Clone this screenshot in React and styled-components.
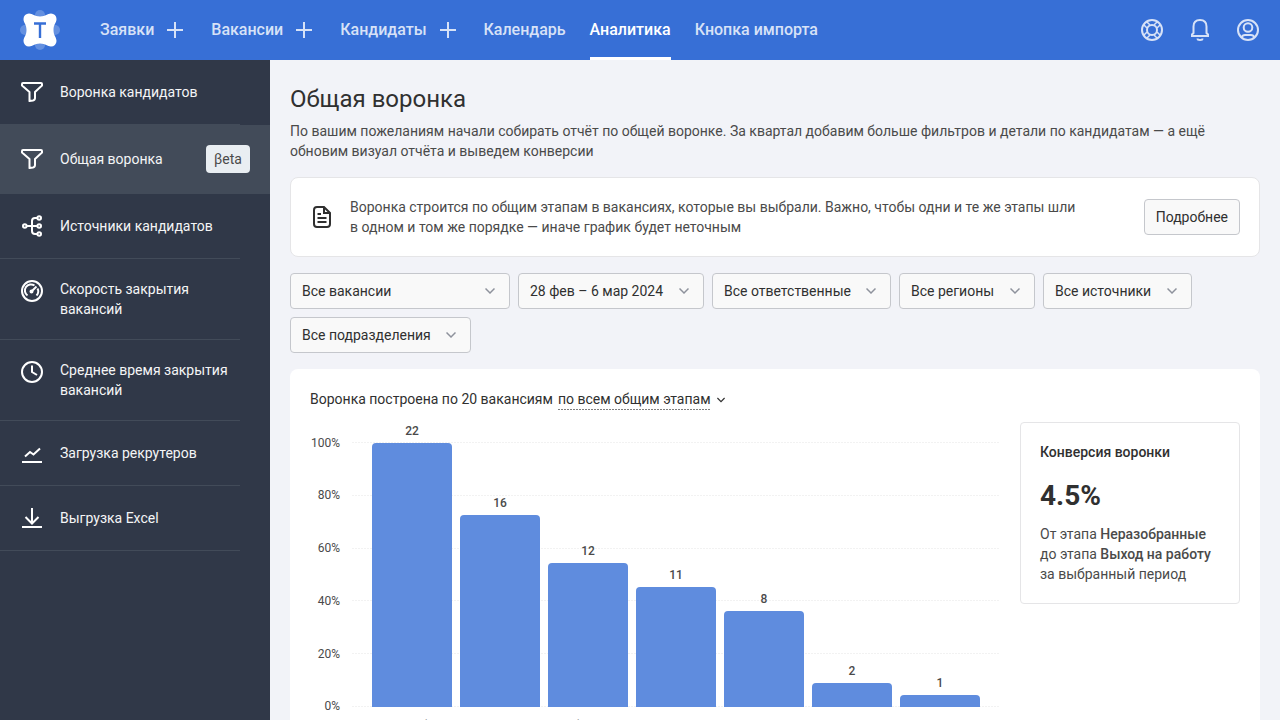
import React from 'react';
import styled, { createGlobalStyle } from 'styled-components';

const GlobalStyles = createGlobalStyle`
  :root {
    --blue: #376fd6;
    --bar: #5f8cde;
    --navy: #303848;
    --navy-light: #424b59;
    --grey: #f2f3f8;
    --text: #303030;
    --text-light: #4a4a4a;
    --line: #e5e5e7;
    --control: #c5c7cc;
    --white: #ffffff;
  }
  *, *::before, *::after {
    box-sizing: border-box;
  }
  body {
    margin: 0;
    background: var(--grey);
    color: var(--text);
    font: 400 14px/20px Roboto, sans-serif;
  }
  button, select {
    font: inherit;
    color: inherit;
  }
  h1, h2, p, ul {
    margin: 0;
    padding: 0;
  }
  ul {
    list-style: none;
  }
`;

const PageStyles = styled.div`
  display: flex;
  flex-direction: column;
  min-height: 100vh;
`;

const HeaderStyles = styled.header`
  display: flex;
  align-items: center;
  height: 60px;
  padding: 0 20px;
  background: var(--blue);
  .home-link {
    display: flex;
    margin-right: 40px;
  }
`;

const NavStyles = styled.nav`
  display: flex;
  flex: 1;
  gap: 24px;
`;

const NavItem = styled.div`
  display: flex;
  align-items: center;
  gap: 9px;
`;

const NavLink = styled.a`
  height: 60px;
  border-bottom: 3px solid ${({ $active }) => ($active ? 'var(--white)' : 'transparent')};
  color: ${({ $active }) => ($active ? 'var(--white)' : '#d7e2f7')};
  font-size: 16px;
  font-weight: 500;
  line-height: 60px;
  text-decoration: none;
  white-space: nowrap;
`;

const IconButton = styled.button`
  display: flex;
  padding: 0;
  border: 0;
  background: none;
  color: #d7e2f7;
  cursor: pointer;
`;

const HeaderTools = styled.div`
  display: flex;
  gap: 24px;
`;

const BodyStyles = styled.div`
  display: flex;
  flex: 1;
`;

const SidebarStyles = styled.nav`
  flex: 0 0 270px;
  background: var(--navy);
  color: var(--white);
`;

const SideItem = styled.li`
  background: ${({ $active }) => ($active ? 'var(--navy-light)' : 'none')};
  &::after {
    content: '';
    display: block;
    height: 1px;
    margin-right: 30px;
    background: var(--navy-light);
  }
`;

const SideLink = styled.a`
  display: flex;
  align-items: ${({ $multiline }) => ($multiline ? 'flex-start' : 'center')};
  gap: 16px;
  padding: 20px;
  color: #f4f5f6;
  text-decoration: none;
  svg {
    flex: none;
    color: var(--white);
  }
  span {
    flex: 1;
  }
`;

const Badge = styled.b`
  padding: 4px 8px;
  border-radius: 4px;
  background: #e9eef2;
  color: var(--text-light);
  font-weight: 400;
`;

const MainStyles = styled.main`
  display: flex;
  flex: 1;
  flex-direction: column;
  gap: 16px;
  min-width: 0;
  padding: 20px;
`;

const Intro = styled.div`
  color: var(--text-light);
  h1 {
    margin-bottom: 4px;
    padding-top: 1px;
    color: var(--text);
    font-size: 24px;
    font-weight: 400;
    line-height: 36px;
  }
`;

const Notice = styled.section`
  display: flex;
  align-items: center;
  gap: 16px;
  padding: 19px;
  border: 1px solid var(--line);
  border-radius: 8px;
  background: var(--white);
  color: var(--text-light);
  svg {
    flex: none;
    color: var(--text);
  }
  p {
    flex: 1;
  }
`;

const Button = styled.button`
  height: 36px;
  padding: 0 11px;
  border: 1px solid var(--control);
  border-radius: 4px;
  background: #f9f9f9;
  color: var(--text);
  cursor: pointer;
`;

const Filters = styled.form`
  display: flex;
  flex-wrap: wrap;
  gap: 8px;
`;

const FilterStyles = styled.label`
  display: grid;
  grid-template-columns: 1fr 40px;
  align-items: center;
  min-width: ${({ $wide }) => ($wide ? '220px' : '0')};
  select {
    grid-area: 1 / 1 / 2 / 3;
    width: 100%;
    height: 36px;
    padding: 0 39px 0 11px;
    border: 1px solid var(--control);
    border-radius: 4px;
    background: #f9f9f9;
    appearance: none;
    cursor: pointer;
  }
  svg {
    grid-area: 1 / 2;
    justify-self: center;
    color: #8e929c;
    pointer-events: none;
  }
`;

const Report = styled.section`
  padding: 20px;
  border-radius: 8px;
  background: var(--white);
`;

const ReportTitle = styled.div`
  display: flex;
  align-items: flex-start;
  gap: 5px;
  margin-bottom: 12px;
`;

const StageButton = styled.button`
  display: flex;
  align-items: center;
  gap: 6px;
  padding: 0;
  border: 0;
  background: none;
  cursor: pointer;
  span::after {
    content: '';
    display: block;
    height: 1px;
    background: repeating-linear-gradient(90deg, #808080 0 2px, transparent 2px 3px);
  }
`;

const ReportBody = styled.div`
  display: flex;
  align-items: flex-start;
  gap: 20px;
`;

const ChartStyles = styled.div`
  display: grid;
  flex: 1;
  grid-template-columns: minmax(0, 1fr);
  grid-template-rows: 20px 265px auto;
  min-width: 0;
  color: var(--text-light);
  font-size: 12px;
  line-height: 16px;
`;

const Scale = styled.div`
  display: flex;
  grid-area: 2 / 1;
  flex-direction: column;
  justify-content: space-between;
`;

const ScaleRow = styled.div`
  display: flex;
  align-items: center;
  gap: 12px;
  height: 1px;
  span {
    width: 30px;
    text-align: right;
  }
  &::after {
    content: '';
    flex: 1;
    height: 1px;
    background: repeating-linear-gradient(90deg, #f2f2f2 0 2px, transparent 2px 3px);
  }
`;

const Bars = styled.div`
  display: flex;
  grid-area: 1 / 1 / 3 / 2;
  gap: 8px;
  height: 285px;
  padding: 0 20px 0 62px;
`;

const Column = styled.div`
  display: flex;
  flex: 1;
  flex-direction: column;
  justify-content: flex-end;
  align-items: center;
  gap: 4px;
  font-weight: 500;
`;

const Bar = styled.div`
  width: 100%;
  border-radius: 4px 4px 0 0;
  background: var(--bar);
`;

const Stages = styled.div`
  display: flex;
  grid-area: 3 / 1;
  gap: 8px;
  padding: 9px 20px 0 62px;
  font-size: 14px;
  line-height: 20px;
  text-align: center;
  span {
    flex: 1 1 0;
    min-width: 0;
    overflow: hidden;
    text-overflow: ellipsis;
  }
`;

const Conversion = styled.aside`
  flex: 0 0 220px;
  padding: 19px;
  border: 1px solid var(--line);
  border-radius: 4px;
  color: var(--text-light);
  h2 {
    color: var(--text);
    font-size: 14px;
    font-weight: 500;
    line-height: 20px;
  }
  .total {
    margin: 16px 0 10px;
    color: var(--text);
    font-size: 28px;
    font-weight: 700;
    line-height: 36px;
  }
  b {
    font-weight: 500;
  }
`;

const icons = {
  plus: <path d="M12 4v16M4 12h16" />,
  funnel: (
    <path
      d="M3 3h18q1 0 1 1v1.500L15 12v6q0 2-2 2.500L9.500 21v-9L2 5.500V4q0-1 1-1z"
      strokeLinejoin="round"
    />
  ),
  sources: (
    <>
      <circle cx="4.800" cy="12" r="1.800" />
      <circle cx="19.200" cy="4" r="1.800" />
      <circle cx="19.200" cy="12" r="1.800" />
      <circle cx="19.200" cy="20" r="1.800" />
      <path d="M6.500 12h11M17.500 4H15q-3 0-3 3v10q0 3 3 3h2.500" />
    </>
  ),
  gauge: (
    <>
      <circle cx="12" cy="12" r="10" />
      <path d="M7.500 16.500a6 6 0 0 1 7-10M17.500 9.500a6 6 0 0 1-1 7" />
      <path d="M12 12l4.500-4.500" />
      <circle cx="11.500" cy="12.500" r="1" />
    </>
  ),
  clock: (
    <>
      <circle cx="12" cy="12" r="10" />
      <path d="M12 5.500V12l5 3" />
    </>
  ),
  load: <path d="M2 21h20M5 15.500l5-4.500 3.500 2.500L20 7.500" />,
  download: <path d="M2 21h20M12 2v15M5.500 11l6.500 6.500 6.500-6.500" />,
  help: (
    <>
      <circle cx="12" cy="12" r="10" />
      <circle cx="12" cy="12" r="5" />
      <path
        d="M6.500 3.500L10 7M3.500 6.500L7 10M17.500 3.500L14 7M20.500 6.500L17 10M6.500 20.500L10 17M3.500 17.500L7 14M17.500 20.500L14 17M20.500 17.500L17 14"
        strokeWidth="1.500"
      />
    </>
  ),
  bell: (
    <>
      <path d="M5.500 15V8.500Q5.500 2 12 2t6.500 6.500V15l1.500 1.500V18H4v-1.500z" />
      <path d="M9.500 20.500q0 1.500 2.500 1.500t2.500-1.500" />
    </>
  ),
  user: (
    <>
      <circle cx="12" cy="12" r="10" />
      <circle cx="12" cy="9.500" r="4.300" />
      <path d="M5.500 19.500q1-2.500 3.500-2.500h6q2.500 0 3.500 2.500" />
    </>
  ),
  document: (
    <>
      <path d="M14 2H7Q4 2 4 5v14q0 3 3 3h10q3 0 3-3V8z" />
      <path d="M14 2v6h6" />
      <path d="M7.500 9h3.500M7.500 13h9M7.500 17h9" />
    </>
  ),
};

function Icon({ name, width = 2 }) {
  return (
    <svg
      width="24"
      height="24"
      viewBox="0 0 24 24"
      fill="none"
      stroke="currentColor"
      strokeWidth={width}
      aria-hidden="true"
    >
      {icons[name]}
    </svg>
  );
}

function Chevron({ size = 10 }) {
  return (
    <svg
      width={size}
      height={size}
      viewBox="0 0 10 10"
      fill="none"
      stroke="currentColor"
      strokeWidth="1.500"
      aria-hidden="true"
    >
      <path d="M.5 2.500L5 7l4.500-4.500" />
    </svg>
  );
}

function Logo() {
  return (
    <svg width="40" height="40" viewBox="0 0 40 40" aria-hidden="true">
      <g fill="#6490e0">
        <circle cx="20" cy="5" r="5" />
        <circle cx="20" cy="35" r="5" />
        <circle cx="5" cy="20" r="5" />
        <circle cx="35" cy="20" r="5" />
      </g>
      <path
        d="M9 3.500C13 3.500 14 6.500 20 6.500S27 3.500 31 3.500A5.500 5.500 0 0 1 36.500 9C36.500 13 33.500 14 33.500 20S36.500 27 36.500 31A5.500 5.500 0 0 1 31 36.500C27 36.500 26 33.500 20 33.500S13 36.500 9 36.500A5.500 5.500 0 0 1 3.500 31C3.500 27 6.500 26 6.500 20S3.500 13 3.500 9A5.500 5.500 0 0 1 9 3.500z"
        fill="#fff"
      />
      <path d="M14 13.500h12M20 13.500V28" stroke="#376fd6" strokeWidth="2.400" />
    </svg>
  );
}

const navItems = [
  { label: 'Заявки', add: 'Добавить заявку' },
  { label: 'Вакансии', add: 'Добавить вакансию' },
  { label: 'Кандидаты', add: 'Добавить кандидата' },
  { label: 'Календарь' },
  { label: 'Аналитика', active: true },
  { label: 'Кнопка импорта' },
];

const sideItems = [
  { icon: 'funnel', label: 'Воронка кандидатов' },
  { icon: 'funnel', label: 'Общая воронка', badge: 'βeta', active: true },
  { icon: 'sources', label: 'Источники кандидатов' },
  { icon: 'gauge', label: 'Скорость закрытия вакансий', multiline: true },
  { icon: 'clock', label: 'Среднее время закрытия вакансий', multiline: true },
  { icon: 'load', label: 'Загрузка рекрутеров' },
  { icon: 'download', label: 'Выгрузка Excel' },
];

const filters = [
  { name: 'Вакансии', value: 'Все вакансии', wide: true },
  { name: 'Период', value: '28 фев – 6 мар 2024' },
  { name: 'Ответственные', value: 'Все ответственные' },
  { name: 'Регионы', value: 'Все регионы' },
  { name: 'Источники', value: 'Все источники' },
  { name: 'Подразделения', value: 'Все подразделения' },
];

// height is in pixels, 264 is the full 100%
const stages = [
  { name: 'Неразобранные', count: 22, height: 264 },
  { name: 'Отклик', count: 16, height: 192 },
  { name: 'Отобранные', count: 12, height: 144 },
  { name: 'Оценка', count: 11, height: 120 },
  { name: 'Интервью', count: 8, height: 96 },
  { name: 'Проверка', count: 2, height: 24 },
  { name: 'Выход', count: 1, height: 12 },
];

function Header() {
  return (
    <HeaderStyles>
      <a href="#home" className="home-link" aria-label="Talantix">
        <Logo />
      </a>
      <NavStyles>
        {navItems.map(({ label, add, active }) => (
          <NavItem key={label}>
            <NavLink href="#nav" $active={active}>
              {label}
            </NavLink>
            {add && (
              <IconButton type="button" aria-label={add}>
                <Icon name="plus" />
              </IconButton>
            )}
          </NavItem>
        ))}
      </NavStyles>
      <HeaderTools>
        <IconButton type="button" aria-label="Помощь">
          <Icon name="help" />
        </IconButton>
        <IconButton type="button" aria-label="Уведомления">
          <Icon name="bell" />
        </IconButton>
        <IconButton type="button" aria-label="Профиль">
          <Icon name="user" />
        </IconButton>
      </HeaderTools>
    </HeaderStyles>
  );
}

function Sidebar() {
  return (
    <SidebarStyles>
      <ul>
        {sideItems.map(({ icon, label, badge, active, multiline }) => (
          <SideItem key={label} $active={active}>
            <SideLink href="#report" $multiline={multiline}>
              <Icon name={icon} />
              <span>{label}</span>
              {badge && <Badge>{badge}</Badge>}
            </SideLink>
          </SideItem>
        ))}
      </ul>
    </SidebarStyles>
  );
}

function Filter({ name, value, wide }) {
  return (
    <FilterStyles $wide={wide}>
      <select aria-label={name} defaultValue={value}>
        <option>{value}</option>
      </select>
      <Chevron />
    </FilterStyles>
  );
}

function Chart() {
  return (
    <ChartStyles>
      <Scale>
        {[100, 80, 60, 40, 20, 0].map((value) => (
          <ScaleRow key={value}>
            <span>{value}%</span>
          </ScaleRow>
        ))}
      </Scale>
      <Bars>
        {stages.map(({ name, count, height }) => (
          <Column key={name}>
            {count}
            <Bar style={{ height }} />
          </Column>
        ))}
      </Bars>
      <Stages>
        {stages.map(({ name }) => (
          <span key={name}>{name}</span>
        ))}
      </Stages>
    </ChartStyles>
  );
}

function App() {
  return (
    <PageStyles>
      <GlobalStyles />
      <Header />
      <BodyStyles>
        <Sidebar />
        <MainStyles>
          <Intro>
            <h1>Общая воронка</h1>
            <p>
              По вашим пожеланиям начали собирать отчёт по общей воронке. За
              квартал добавим больше фильтров и детали по кандидатам — а ещё
              обновим визуал отчёта и выведем конверсии
            </p>
          </Intro>
          <Notice>
            <Icon name="document" />
            <p>
              Воронка строится по общим этапам в вакансиях, которые вы выбрали.
              Важно, чтобы одни и те же этапы шли в&nbsp;одном и том же порядке
              — иначе график будет неточным
            </p>
            <Button type="button">Подробнее</Button>
          </Notice>
          <Filters>
            {filters.map((filter) => (
              <Filter key={filter.name} {...filter} />
            ))}
          </Filters>
          <Report>
            <ReportTitle>
              Воронка построена по 20 вакансиям
              <StageButton type="button">
                <span>по всем общим этапам</span>
                <Chevron size={8} />
              </StageButton>
            </ReportTitle>
            <ReportBody>
              <Chart />
              <Conversion>
                <h2>Конверсия воронки</h2>
                <p className="total">4.5%</p>
                <p>
                  От этапа <b>Неразобранные</b>
                  <br />
                  до этапа <b>Выход на работу</b>
                  <br />
                  за выбранный период
                </p>
              </Conversion>
            </ReportBody>
          </Report>
        </MainStyles>
      </BodyStyles>
    </PageStyles>
  );
}

export default App;
